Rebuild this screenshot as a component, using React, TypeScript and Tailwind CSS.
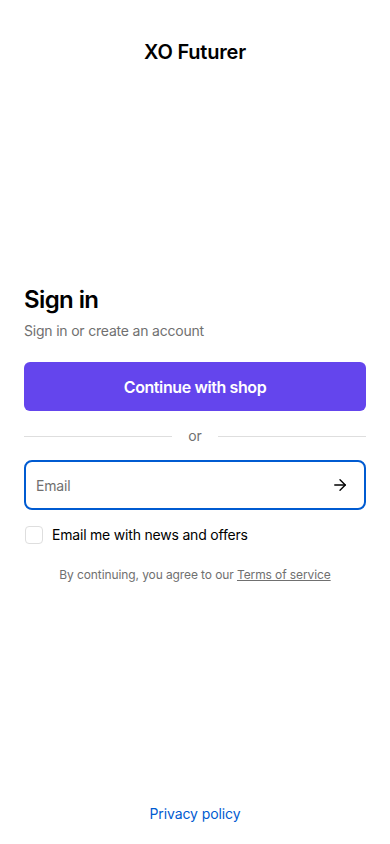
import React from 'react';
import { ArrowRight } from 'lucide-react';

function App() {
    return (
        <div className="flex min-h-[844px] w-full flex-col bg-white font-['Inter',sans-serif] text-[#000]">
            <header className="flex h-[104px] items-center justify-center">
                <h1 className="text-[20px] font-semibold leading-6 tracking-[-0.2px]">XO Futurer</h1>
            </header>

            <main className="flex-1 px-6 pt-[180px]">
                <h2 className="text-[24px] font-semibold leading-8 tracking-[-0.6px]">Sign in</h2>
                <p className="mt-[5px] text-[14px] leading-5 tracking-[-0.2px] text-[#707070]">Sign in or create an account</p>

                <button className="mt-[21px] flex h-[49px] w-full items-center justify-center rounded-[6px] bg-[#6445ed] text-[16px] font-semibold tracking-[-0.4px] text-white">
                    Continue with shop
                </button>

                <div className="mt-[16px] flex h-[18px] items-center gap-4">
                    <div className="h-px flex-1 bg-[#dedede]" />
                    <span className="text-[14px] leading-[18px] text-[#707070]">or</span>
                    <div className="h-px flex-1 bg-[#dedede]" />
                </div>

                <div className="mt-[15px] flex h-[50px] items-center rounded-[8px] border-2 border-[#005bd1] pl-[10px] pr-[15px]">
                    <input
                        placeholder="Email"
                        className="flex-1 bg-transparent text-[14px] tracking-[-0.2px] text-[#000] outline-none placeholder:text-[#707070]"
                    />
                    <ArrowRight className="h-[18px] w-[18px] text-[#000]" strokeWidth={1.8} />
                </div>

                <label className="mt-[15px] flex items-center gap-[9px] pl-px">
                    <span className="h-[18px] w-[18px] rounded-[4px] border border-[#dedede] bg-white" />
                    <span className="text-[14px] leading-5 tracking-[-0.2px] text-[#000]">Email me with news and offers</span>
                </label>

                <p className="mt-[20px] text-center text-[12px] leading-5 tracking-[-0.1px] text-[#707070]">
                    By continuing, you agree to our{' '}
                    <a className="underline">Terms of service</a>
                </p>
            </main>

            <footer className="flex h-[60px] items-start justify-center pt-[20px]">
                <a className="text-[14px] leading-5 tracking-[-0.1px] text-[#005bd1]">Privacy policy</a>
            </footer>
        </div>
    );
}

export default App;
